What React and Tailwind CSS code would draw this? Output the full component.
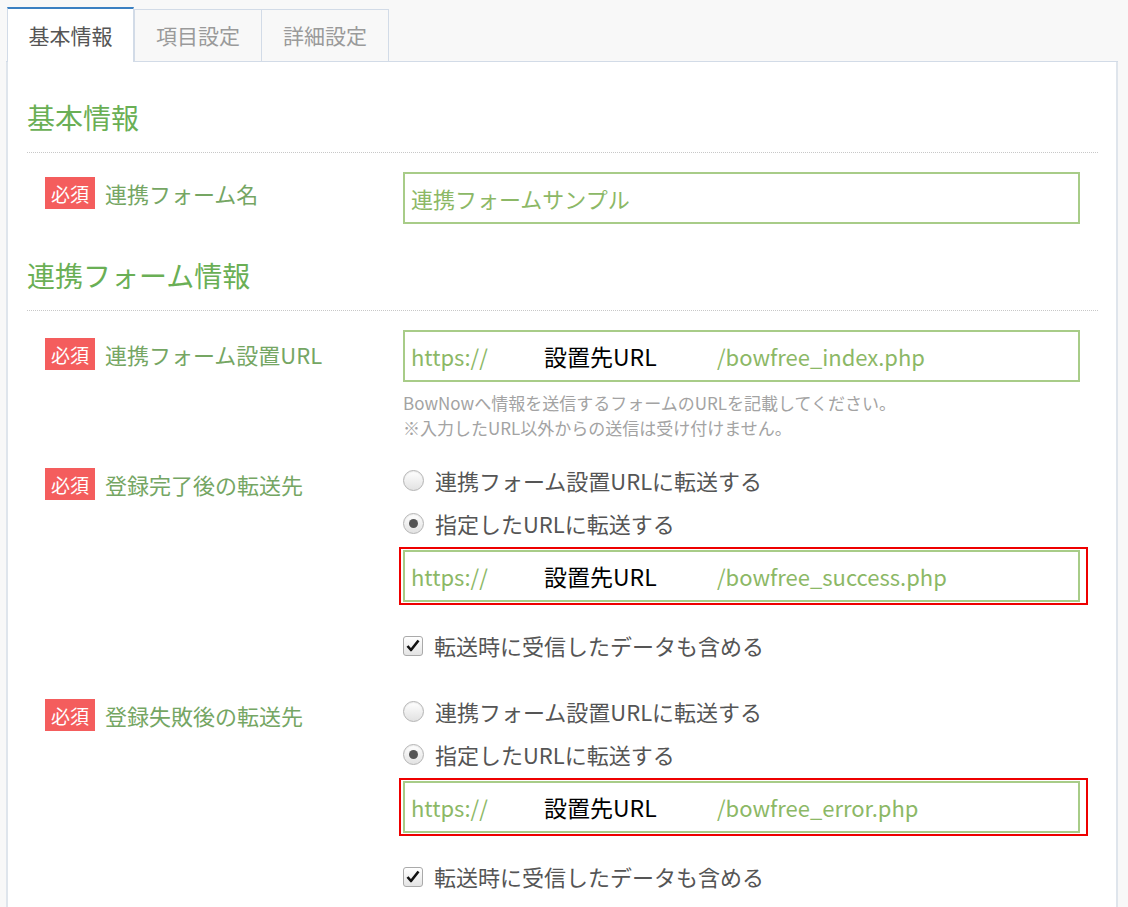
import React from "react";

function Badge() {
  return (
    <span className="inline-flex h-[32px] w-[50px] items-center justify-center bg-[#f45d5d] text-[19px] leading-none text-white">
      必須
    </span>
  );
}

function Label({ text, pt }) {
  return (
    <div className={`flex w-[358px] shrink-0 items-center gap-[10px] self-start ${pt}`}>
      <Badge />
      <span className="text-[22px] leading-[32px] text-[#75a663]">{text}</span>
    </div>
  );
}

function UrlInput({ tail, boxed }) {
  return (
    <div className="relative">
      {boxed && (
        <div className="pointer-events-none absolute -top-[3px] -bottom-[3px] -left-[4px] -right-[8px] border-2 border-[#ee0000]" />
      )}
      <div className="flex h-[52px] items-center border-2 border-[#a8cc88] bg-white pl-[6px] text-[22px] text-[#8cb866]">
        <span className="w-[133px] overflow-hidden whitespace-nowrap">https://</span>
        <span className="w-[173px] whitespace-nowrap text-[23px] text-black">設置先URL</span>
        <span className="whitespace-nowrap">{tail}</span>
      </div>
    </div>
  );
}

function Radio({ checked, text }) {
  return (
    <div className="flex h-[43px] items-center gap-[11px]">
      <span className="flex h-[21px] w-[21px] items-center justify-center rounded-full border border-[#b4b4b4] bg-gradient-to-b from-white to-[#e2e2e2] shadow-[inset_0_1px_1px_rgba(0,0,0,0.08)]">
        {checked && <span className="h-[9px] w-[9px] rounded-full bg-[#555]" />}
      </span>
      <span className="text-[22px] text-[#555]">{text}</span>
    </div>
  );
}

function Check({ text }) {
  return (
    <div className="flex h-[43px] items-center gap-[11px]">
      <span className="flex h-[20px] w-[20px] items-center justify-center rounded-[3px] border border-[#aaa] bg-gradient-to-b from-white to-[#e4e4e4]">
        <svg width="14" height="13" viewBox="0 0 14 13">
          <path d="M1.5 7 L5 11 L12.5 1.5" fill="none" stroke="#111" strokeWidth="2.6" strokeLinejoin="round" />
        </svg>
      </span>
      <span className="text-[22px] text-[#555]">{text}</span>
    </div>
  );
}

function SectionHeading({ text, mt }) {
  return (
    <div className={`${mt} border-b border-dotted border-[#c8c8c8] pb-[15px]`}>
      <h2 className="h-[40px] text-[28px] leading-[40px] font-normal text-[#6aaf55]">{text}</h2>
    </div>
  );
}

function RedirectRow({ label, tail, mt }) {
  return (
    <div className={`flex ${mt}`}>
      <Label text={label} pt="pt-[9px]" />
      <div className="flex-1">
        <Radio text="連携フォーム設置URLに転送する" />
        <Radio checked text="指定したURLに転送する" />
        <div className="mt-[5px]">
          <UrlInput tail={tail} boxed />
        </div>
        <div className="mt-[22px]">
          <Check text="転送時に受信したデータも含める" />
        </div>
      </div>
    </div>
  );
}

export default function App() {
  return (
    <div className="h-[907px] overflow-hidden bg-[#f8f8f8] pl-[6px] pr-[10px] pt-[8px] font-['Noto_Sans_CJK_JP','Noto_Sans',sans-serif]">
      <div className="flex h-[54px] items-end border-b border-[#d2dbe7] pl-[1px]">
        <div className="relative z-10 -mb-px flex h-[55px] w-[127px] items-center justify-center border-x border-t-2 border-x-[#d2dbe7] border-t-[#3b80c2] bg-white text-[21px] text-[#555]">
          基本情報
        </div>
        <div className="flex h-[52px] w-[128px] items-center justify-center border-x border-t border-[#d2dbe7] bg-[#f8f8f8] text-[21px] text-[#9a9a9a]">
          項目設定
        </div>
        <div className="-ml-px flex h-[52px] w-[128px] items-center justify-center border-x border-t border-[#d2dbe7] bg-[#f8f8f8] text-[21px] text-[#9a9a9a]">
          詳細設定
        </div>
      </div>
      <div className="min-h-[900px] border-x-2 border-[#dfe5ec] bg-white pl-[19px] pr-[18px]">
        <SectionHeading text="基本情報" mt="pt-[35px]" />
        <div className="flex px-[18px] pt-[19px]">
          <Label text="連携フォーム名" pt="pt-[5px]" />
          <div className="flex-1">
            <div className="flex h-[52px] items-center border-2 border-[#a8cc88] bg-white pl-[6px] text-[22px] text-[#8cb866]">
              連携フォームサンプル
            </div>
          </div>
        </div>
        <SectionHeading text="連携フォーム情報" mt="mt-[31px]" />
        <div className="px-[18px]">
          <div className="flex pt-[19px]">
            <Label text="連携フォーム設置URL" pt="pt-[8px]" />
            <div className="flex-1">
              <UrlInput tail="/bowfree_index.php" />
              <div className="mt-[8px] text-[17px] leading-[25px] text-[#a3a3a3]">
                <div>BowNowへ情報を送信するフォームのURLを記載してください。</div>
                <div>※入力したURL以外からの送信は受け付けません。</div>
              </div>
            </div>
          </div>
          <RedirectRow label="登録完了後の転送先" tail="/bowfree_success.php" mt="mt-[19px]" />
          <RedirectRow label="登録失敗後の転送先" tail="/bowfree_error.php" mt="mt-[23px]" />
        </div>
      </div>
    </div>
  );
}
